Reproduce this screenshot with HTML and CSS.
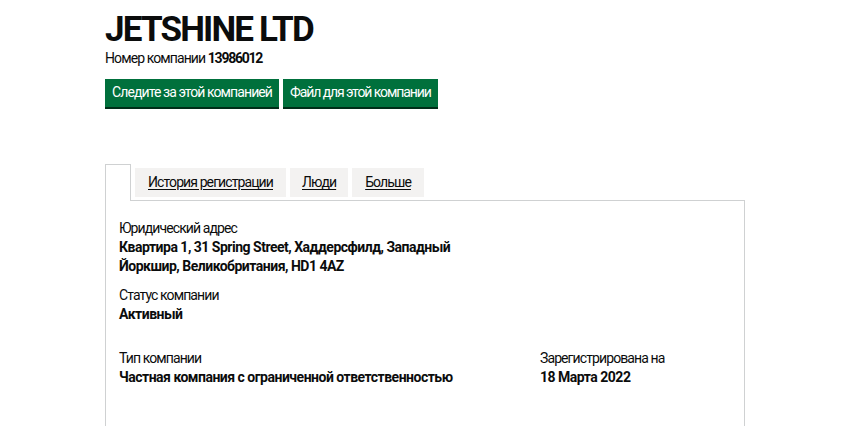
FILE: index.html
```html
<!DOCTYPE html>
<html lang="ru">
<head>
<meta charset="utf-8">
<title>JETSHINE LTD</title>
<link rel="stylesheet" href="styles.css">
</head>
<body>
<main class="page">
  <h1 class="title">JETSHINE LTD</h1>
  <p class="number">Номер компании <strong>13986012</strong></p>
  <div class="actions">
    <a class="button" href="#">Следите за этой компанией</a>
    <a class="button button-file" href="#">Файл для этой компании</a>
  </div>
  <ul class="tabs">
    <li class="tab tab-active"></li>
    <li class="tab"><a href="#">История регистрации</a></li>
    <li class="tab tab-narrow"><a href="#">Люди</a></li>
    <li class="tab"><a href="#">Больше</a></li>
  </ul>
  <section class="panel">
    <dl class="group">
      <dt class="label">Юридический адрес</dt>
      <dd class="value address">Квартира 1, 31 Spring Street, Хаддерсфилд, Западный Йоркшир, Великобритания, HD1 4AZ</dd>
    </dl>
    <dl class="group group-status">
      <dt class="label">Статус компании</dt>
      <dd class="value">Активный</dd>
    </dl>
    <div class="row">
      <dl class="group">
        <dt class="label">Тип компании</dt>
        <dd class="value">Частная компания с ограниченной ответственностью</dd>
      </dl>
      <dl class="group">
        <dt class="label">Зарегистрирована на</dt>
        <dd class="value">18 Марта 2022</dd>
      </dl>
    </div>
  </section>
</main>
</body>
</html>
```

FILE: styles.css
```css
html, body {
  margin: 0;
  padding: 0;
  background: #ffffff;
}
body {
  font-family: Roboto, "Liberation Sans", Arial, sans-serif;
  color: #0b0c0c;
  font-size: 14px;
  line-height: 19px;
  letter-spacing: -0.9px;
}
.page {
  width: 640px;
  margin: 0 auto;
  padding-top: 12px;
}
.title {
  margin: 0;
  font-size: 35px;
  line-height: 36px;
  font-weight: 700;
  letter-spacing: -1.85px;
}
.number {
  margin: 0;
  padding-top: 1px;
}
.number strong {
  font-weight: 700;
  letter-spacing: -1.25px;
}
.actions {
  display: flex;
  gap: 4px;
  margin-top: 11px;
}
.button {
  display: block;
  background: #00703c;
  color: #ffffff;
  text-decoration: none;
  padding: 4px 7px 5px;
  box-shadow: 0 2px 0 #002d18;
}
.button-file {
  letter-spacing: -1.08px;
}
.tabs {
  list-style: none;
  margin: 57px 0 0;
  padding: 0;
  display: flex;
  align-items: flex-start;
}
.tab {
  margin: 4px 0 0 4px;
  background: #f3f2f1;
  padding: 5px 13px;
}
.tab a {
  color: #0b0c0c;
  text-decoration: underline;
  text-underline-offset: 2px;
}
.tab-narrow {
  padding: 5px 12px;
}
.tab-active {
  margin: 0 0 -1px 0;
  width: 24px;
  height: 36px;
  padding: 0;
  background: #ffffff;
  border: 1px solid #cfd1d2;
  border-bottom: 0;
  position: relative;
  z-index: 1;
}
.panel {
  border: 1px solid #cfd1d2;
  padding: 18px 13px 60px;
}
.group {
  margin: 0;
}
.label {
  margin: 0;
}
.value {
  margin: 0;
  font-weight: 700;
  letter-spacing: -0.5px;
}
.address {
  width: 335px;
  margin-bottom: 10px;
}
.group-status {
  margin-bottom: 25px;
}
.row {
  display: grid;
  grid-template-columns: 421px 1fr;
}
```
